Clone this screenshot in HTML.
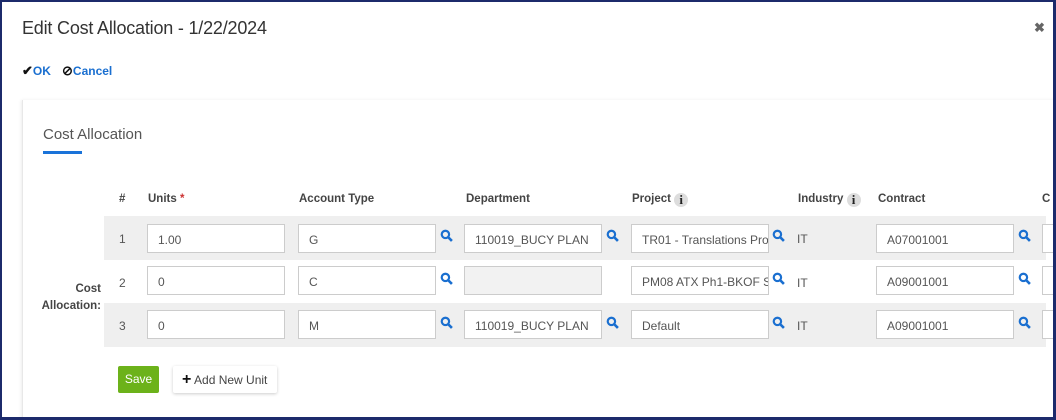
<!DOCTYPE html>
<html><head><style>
*{box-sizing:border-box;margin:0;padding:0}
body{width:1056px;height:420px;overflow:hidden;background:#fff;font-family:"Liberation Sans",sans-serif;color:#444;position:relative}
.frame{position:absolute;left:0;top:0;width:1056px;height:420px;overflow:hidden}
.bord{position:absolute;left:0;top:0;width:1056px;height:420px;border:2px solid #1c2a6b;border-right-width:3px;border-bottom-width:3px;z-index:10}
.a{position:absolute;white-space:nowrap}
.title{left:22px;top:18px;font-size:18px;color:#333;letter-spacing:-0.2px}
.x{left:1034px;top:20px;font-size:13px;color:#666;font-weight:bold}
.link{font-size:12px;color:#1a6fd0;font-weight:bold;top:63px}
.card{left:22px;top:100px;width:1040px;height:330px;border-left:1px solid #e8e8e8;box-shadow:-1px 0 3px #eee}
.tab{left:43px;top:126px;font-size:15px;color:#555}
.ul{left:43px;top:151px;width:39px;height:3px;background:#1a73d9}
.hd{top:193px;font-size:11.5px;color:#444;font-weight:bold}
.row{left:104px;width:942px;height:44px}
.inp{position:absolute;height:29px;border:1px solid #ccc;background:#fff;font-size:12px;color:#555;padding:8px 10px 6px;width:138px;overflow:hidden;white-space:nowrap}
.num{position:absolute;font-size:12px;color:#555;left:15px;top:16px}
.it{position:absolute;font-size:12px;color:#555;top:16px;left:693px}
.s{position:absolute;top:13px;width:13px;height:13px}
.lbl{left:40px;font-size:11.5px;color:#444;font-weight:bold;text-align:right;width:61px}
.btn{top:366px;height:27px;font-size:12px}
.info{display:inline-block;width:14px;height:14px;border-radius:50%;background:#ddd;color:#222;font-family:'Liberation Serif';text-align:center;line-height:14px;font-size:13px;font-weight:bold;vertical-align:-2px}
</style></head><body><div class="frame">
<div class="a title">Edit Cost Allocation - 1/22/2024</div>
<div class="a x">✖</div>
<div class="a link" style="left:22px"><span style="color:#111;font-size:13px">✔</span>OK</div>
<div class="a link" style="left:62px"><span style="color:#111;font-size:13px">⊘</span>Cancel</div>
<div class="a card"></div>
<div class="a tab">Cost Allocation</div>
<div class="a ul"></div>
<div class="a hd" style="left:119px">#</div>
<div class="a hd" style="left:148px">Units <span style="color:#c33">*</span></div>
<div class="a hd" style="left:299px">Account Type</div>
<div class="a hd" style="left:466px">Department</div>
<div class="a hd" style="left:632px">Project <span class="info">i</span></div>
<div class="a hd" style="left:798px">Industry <span class="info">i</span></div>
<div class="a hd" style="left:878px">Contract</div>
<div class="a hd" style="left:1042px">C</div>

<div class="a row" style="top:216px;background:#efefef">
<span class="num">1</span>
<div class="inp" style="left:43px;top:8px">1.00</div>
<div class="inp" style="left:194px;top:8px">G</div>
<svg class="s" style="left:336px" viewBox="0 0 12 12"><circle cx="5" cy="5" r="3.4" fill="none" stroke="#1a6fd0" stroke-width="2"/><path d="M7.5 7.5L11 11" stroke="#1a6fd0" stroke-width="2.4"/></svg>
<div class="inp" style="left:360px;top:8px">110019_BUCY PLAN</div>
<svg class="s" style="left:502px" viewBox="0 0 12 12"><circle cx="5" cy="5" r="3.4" fill="none" stroke="#1a6fd0" stroke-width="2"/><path d="M7.5 7.5L11 11" stroke="#1a6fd0" stroke-width="2.4"/></svg>
<div class="inp" style="left:527px;top:8px">TR01 - Translations Project</div>
<svg class="s" style="left:668px" viewBox="0 0 12 12"><circle cx="5" cy="5" r="3.4" fill="none" stroke="#1a6fd0" stroke-width="2"/><path d="M7.5 7.5L11 11" stroke="#1a6fd0" stroke-width="2.4"/></svg>
<span class="it">IT</span>
<div class="inp" style="left:772px;top:8px">A07001001</div>
<svg class="s" style="left:914px" viewBox="0 0 12 12"><circle cx="5" cy="5" r="3.4" fill="none" stroke="#1a6fd0" stroke-width="2"/><path d="M7.5 7.5L11 11" stroke="#1a6fd0" stroke-width="2.4"/></svg>
<div class="inp" style="left:938px;top:8px"></div>
</div>

<div class="a row" style="top:260px;background:#fff">
<span class="num">2</span>
<div class="inp" style="left:43px;top:6px">0</div>
<div class="inp" style="left:194px;top:6px">C</div>
<svg class="s" style="left:336px;top:12px" viewBox="0 0 12 12"><circle cx="5" cy="5" r="3.4" fill="none" stroke="#1a6fd0" stroke-width="2"/><path d="M7.5 7.5L11 11" stroke="#1a6fd0" stroke-width="2.4"/></svg>
<div class="inp" style="left:360px;top:6px;background:#f2f2f2"></div>
<div class="inp" style="left:527px;top:6px">PM08 ATX Ph1-BKOF Sys</div>
<svg class="s" style="left:668px;top:12px" viewBox="0 0 12 12"><circle cx="5" cy="5" r="3.4" fill="none" stroke="#1a6fd0" stroke-width="2"/><path d="M7.5 7.5L11 11" stroke="#1a6fd0" stroke-width="2.4"/></svg>
<span class="it">IT</span>
<div class="inp" style="left:772px;top:6px">A09001001</div>
<svg class="s" style="left:914px;top:12px" viewBox="0 0 12 12"><circle cx="5" cy="5" r="3.4" fill="none" stroke="#1a6fd0" stroke-width="2"/><path d="M7.5 7.5L11 11" stroke="#1a6fd0" stroke-width="2.4"/></svg>
<div class="inp" style="left:938px;top:6px"></div>
</div>

<div class="a row" style="top:303px;background:#efefef">
<span class="num">3</span>
<div class="inp" style="left:43px;top:7px">0</div>
<div class="inp" style="left:194px;top:7px">M</div>
<svg class="s" style="left:336px" viewBox="0 0 12 12"><circle cx="5" cy="5" r="3.4" fill="none" stroke="#1a6fd0" stroke-width="2"/><path d="M7.5 7.5L11 11" stroke="#1a6fd0" stroke-width="2.4"/></svg>
<div class="inp" style="left:360px;top:7px">110019_BUCY PLAN</div>
<svg class="s" style="left:502px" viewBox="0 0 12 12"><circle cx="5" cy="5" r="3.4" fill="none" stroke="#1a6fd0" stroke-width="2"/><path d="M7.5 7.5L11 11" stroke="#1a6fd0" stroke-width="2.4"/></svg>
<div class="inp" style="left:527px;top:7px">Default</div>
<svg class="s" style="left:668px" viewBox="0 0 12 12"><circle cx="5" cy="5" r="3.4" fill="none" stroke="#1a6fd0" stroke-width="2"/><path d="M7.5 7.5L11 11" stroke="#1a6fd0" stroke-width="2.4"/></svg>
<span class="it">IT</span>
<div class="inp" style="left:772px;top:7px">A09001001</div>
<svg class="s" style="left:914px" viewBox="0 0 12 12"><circle cx="5" cy="5" r="3.4" fill="none" stroke="#1a6fd0" stroke-width="2"/><path d="M7.5 7.5L11 11" stroke="#1a6fd0" stroke-width="2.4"/></svg>
<div class="inp" style="left:938px;top:7px"></div>
</div>

<div class="a lbl" style="top:283px">Cost</div>
<div class="a lbl" style="top:300px">Allocation:</div>

<div class="a btn" style="left:118px;width:41px;background:#6cb21a;color:#fff;border-radius:2px;text-align:center;line-height:27px">Save</div>
<div class="a btn" style="left:173px;width:104px;background:#fff;border-radius:2px;box-shadow:0 1px 3px rgba(0,0,0,.2);line-height:27px;padding-left:9px;color:#444"><b style="color:#111;font-size:16px">+</b> Add New Unit</div>
</div><div class="bord"></div></body></html>
